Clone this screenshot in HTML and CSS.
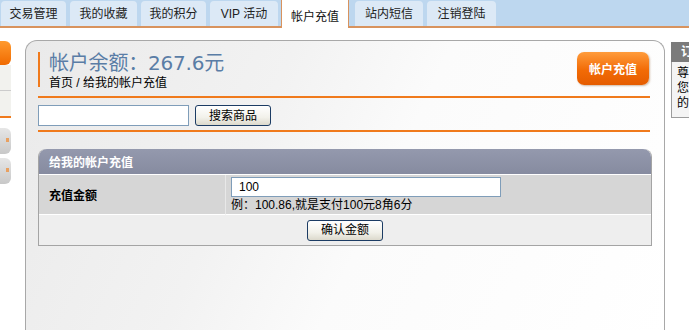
FILE: index.html
```
<!DOCTYPE html>
<html lang="zh-CN">
<head>
  <meta charset="UTF-8">
  <title>帐户充值</title>
  <link rel="stylesheet" href="styles.css">
</head>
<body>
  <nav class="tabs">
    <a class="tab">交易管理</a>
    <a class="tab">我的收藏</a>
    <a class="tab">我的积分</a>
    <a class="tab">VIP 活动</a>
    <a class="tab active">帐户充值</a>
    <a class="tab">站内短信</a>
    <a class="tab">注销登陆</a>
  </nav>

  <div class="layout">
    <aside class="side-left">
      <div class="side-head"></div>
      <div class="side-body"></div>
      <div class="side-btn"><span></span></div>
      <div class="side-btn"><span></span></div>
    </aside>

    <main class="panel">
      <div class="panel-head">
        <div class="title">
          <h1>帐户余额：267.6元</h1>
          <div class="crumb">首页 / 给我的帐户充值</div>
        </div>
        <button class="pay-btn">帐户充值</button>
      </div>

      <div class="search">
        <input type="text" class="search-input">
        <button class="btn btn-search">搜索商品</button>
      </div>

      <table class="form-box">
        <thead>
          <tr><th colspan="2">给我的帐户充值</th></tr>
        </thead>
        <tbody>
          <tr class="row-amount">
            <td class="label">充值金额</td>
            <td class="value">
              <input type="text" class="amount-input" value="100">
              <div class="hint">例：100.86,就是支付100元8角6分</div>
            </td>
          </tr>
          <tr class="row-submit">
            <td colspan="2"><button class="btn">确认金额</button></td>
          </tr>
        </tbody>
      </table>
    </main>

    <aside class="side-right">
      <div class="notice-head">订</div>
      <div class="notice-body">尊<br>您<br>的</div>
    </aside>
  </div>
</body>
</html>
```

FILE: styles.css
```
:root {
  --orange: #f07a1c;
  --tab-line: #d8935e;
  --blue-bar: #bdd7ef;
  --tab-bg: #dce9f6;
  --title: #5a7da6;
}

body {
  margin: 0;
  font-family: "Liberation Sans", "Noto Sans CJK SC", sans-serif;
  font-size: 12px;
  color: #000;
  background: #fff;
  overflow: hidden;
  height: 330px;
}

.tabs {
  display: flex;
  align-items: flex-end;
  height: 26px;
  padding-left: 1px;
  background: var(--blue-bar);
  border-bottom: 2px solid var(--tab-line);
}

.tab {
  height: 25px;
  line-height: 26px;
  width: 65px;
  margin-right: 4px;
  text-align: center;
  color: #222;
  background: var(--tab-bg);
  border-radius: 4px 4px 0 0;
}

.tab:nth-child(2) { width: 67px; }
.tab:nth-child(4) { width: 68px; }
.tab:nth-child(6) { width: 68px; margin-left: 2px; }
.tab:nth-child(7) { width: 69px; }

.tab.active {
  height: 28px;
  line-height: 34px;
  width: 66px;
  margin-bottom: -2px;
  margin-left: -1px;
  background: #fff;
  border: 1px solid var(--tab-line);
  border-bottom: none;
  border-radius: 0;
  color: #111;
}

.layout {
  display: flex;
  align-items: flex-start;
  padding-top: 12px;
}

/* left column, mostly off screen */
.side-left {
  width: 11px;
  flex-shrink: 0;
  padding-top: 1px;
}

.side-head {
  height: 24px;
  background: linear-gradient(#ff9a2e, #f06a00);
  border-radius: 0 6px 6px 0;
}

.side-body {
  height: 51px;
  border-bottom: 2px solid var(--orange);
  background-image: linear-gradient(#ccc, #ccc);
  background-size: 100% 1px;
  background-position: 0 25px;
  background-repeat: no-repeat;
  background-color: #f2f2ee;
}

.side-btn {
  height: 26px;
  margin-top: 10px;
  background: linear-gradient(#e6e6e6, #c8c8c8);
  border-radius: 0 6px 6px 0;
  position: relative;
}

.side-btn + .side-btn { margin-top: 4px; }

.side-btn span {
  position: absolute;
  right: 2px;
  top: 10px;
  width: 3px;
  height: 4px;
  background: #e8a060;
}

.panel {
  width: 640px;
  height: 300px;
  margin-left: 14px;
  flex-shrink: 0;
  border: 1px solid #a8a8a8;
  border-bottom: none;
  border-radius: 12px 12px 0 0;
  background: linear-gradient(115deg, #eaeaea 0%, #f2f2f2 35%, #fbfbfb 55%, #fff 100%);
  padding: 11px 14px 0 12px;
  box-sizing: border-box;
}

.panel-head {
  display: flex;
  justify-content: space-between;
  align-items: flex-start;
  border-bottom: 2px solid var(--orange);
  padding-bottom: 9px;
}

.title {
  border-left: 2px solid var(--orange);
  padding-left: 9px;
  height: 35px;
}

.title h1 {
  margin: 0;
  font-size: 20px;
  font-weight: normal;
  color: var(--title);
  line-height: 22px;
  font-family: "DejaVu Sans", "Noto Sans CJK SC", sans-serif;
  letter-spacing: -0.2px;
}

.crumb {
  margin-top: 2px;
  line-height: 14px;
}

.pay-btn {
  width: 72px;
  height: 33px;
  margin-right: 1px;
  border: none;
  border-radius: 7px;
  background: linear-gradient(#ff9c3c, #f26b06 55%, #e55c00);
  box-shadow: 1px 1px 2px rgba(120, 60, 0, 0.35);
  color: #fff;
  font-weight: bold;
  font-size: 12px;
  font-family: "Liberation Sans", "Noto Sans CJK SC", sans-serif;
  padding: 0;
}

.search {
  display: flex;
  gap: 6px;
  padding: 7px 0 4px;
  border-bottom: 2px solid var(--orange);
}

.search-input {
  width: 151px;
  height: 21px;
  box-sizing: border-box;
  border: 1px solid #7f9db9;
  background: #fff;
  margin: 0;
}

.btn {
  height: 21px;
  padding: 0 11px;
  margin: 0;
  border: 1px solid #1c3c64;
  border-radius: 3px;
  background: linear-gradient(#fff, #f2f1ea 60%, #dcd9cc);
  font-family: "Liberation Sans", "Noto Sans CJK SC", sans-serif;
  font-size: 12px;
  color: #000;
  line-height: 18px;
}

.btn-search { width: 76px; padding: 0; }

.form-box {
  width: 614px;
  margin-top: 17px;
  border-collapse: separate;
  border-spacing: 0;
  border: 1px solid #a4a4a4;
  border-top: none;
  border-radius: 8px 8px 0 0;
}

.form-box th {
  height: 25px;
  padding: 0 0 0 10px;
  text-align: left;
  color: #fff;
  font-size: 12px;
  background: linear-gradient(#9499ad, #868ba0);
  border-radius: 8px 8px 0 0;
  border-bottom: 1px solid #fff;
}

.row-amount td {
  background: #d6d6d6;
  height: 37px;
  border-bottom: 1px solid #fff;
}

.row-amount .label {
  width: 176px;
  padding: 0 0 0 10px;
  font-weight: bold;
  border-right: 1px solid #e8e8e8;
}

.row-amount .value {
  padding: 2px 0 0 5px;
  vertical-align: top;
}

.amount-input {
  display: block;
  width: 270px;
  height: 20px;
  box-sizing: border-box;
  margin: 0;
  border: 1px solid #7f9db9;
  padding: 0 7px;
  font-family: "Liberation Sans", "Noto Sans CJK SC", sans-serif;
  font-size: 12px;
}

.hint {
  line-height: 16px;
}

.row-submit td {
  height: 30px;
  background: #eeeeee;
  text-align: center;
  padding: 0;
}

.row-submit .btn { width: 76px; padding: 0; }

.side-right {
  margin-left: 6px;
  width: 30px;
  flex-shrink: 0;
  padding-top: 2px;
}

.notice-head {
  height: 20px;
  line-height: 20px;
  background: #7b7b7b;
  color: #fff;
  font-weight: bold;
  padding-left: 10px;
}

.notice-body {
  border: 1px solid #9c9c9c;
  border-top: none;
  background: #f4f4f4;
  padding: 4px 0 5px 5px;
  line-height: 15px;
  height: 46px;
}
```
